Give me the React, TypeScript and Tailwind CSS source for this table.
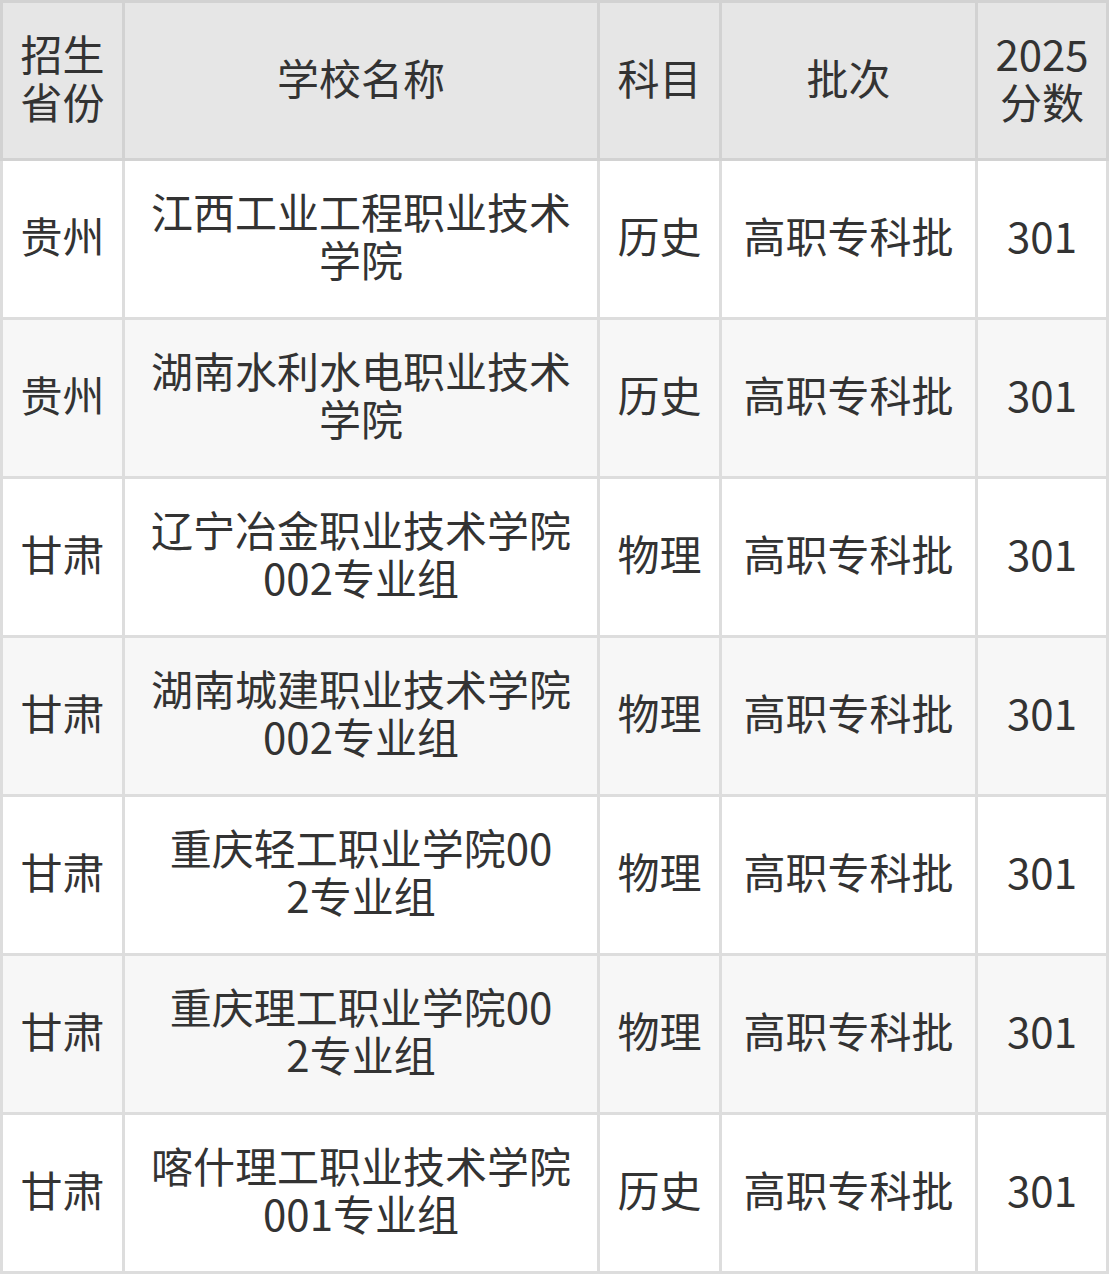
const font = { fontFamily: '"Noto Sans CJK SC", "Noto Sans", sans-serif' };

interface Row {
  province: string;
  school: string[];
  subject: string;
  batch: string;
  score: string;
}

const rows: Row[] = [
  { province: '贵州', school: ['江西工业工程职业技术', '学院'], subject: '历史', batch: '高职专科批', score: '301' },
  { province: '贵州', school: ['湖南水利水电职业技术', '学院'], subject: '历史', batch: '高职专科批', score: '301' },
  { province: '甘肃', school: ['辽宁冶金职业技术学院', '002专业组'], subject: '物理', batch: '高职专科批', score: '301' },
  { province: '甘肃', school: ['湖南城建职业技术学院', '002专业组'], subject: '物理', batch: '高职专科批', score: '301' },
  { province: '甘肃', school: ['重庆轻工职业学院00', '2专业组'], subject: '物理', batch: '高职专科批', score: '301' },
  { province: '甘肃', school: ['重庆理工职业学院00', '2专业组'], subject: '物理', batch: '高职专科批', score: '301' },
  { province: '甘肃', school: ['喀什理工职业技术学院', '001专业组'], subject: '历史', batch: '高职专科批', score: '301' },
];

const cols = 'grid grid-cols-[119px_472px_119px_253px_128px] gap-x-[3px]';

function Cell({ lines, bg }: { lines: string[]; bg: string }) {
  return (
    <div className={`flex flex-col items-center justify-center pb-[8px] text-center ${bg}`}>
      {lines.map((l, i) => (
        <div key={i} className="whitespace-nowrap">{l}</div>
      ))}
    </div>
  );
}

export default function App() {
  return (
    <div className="w-[1110px] bg-white text-[#333333] text-[42px] leading-[48px]" style={font}>
      <div className="w-[1109px]">
        <div className={`${cols} bg-[#d2d2d2] p-[3px] h-[161px]`}>
          <Cell lines={['招生', '省份']} bg="bg-[#e6e6e6]" />
          <Cell lines={['学校名称']} bg="bg-[#e6e6e6]" />
          <Cell lines={['科目']} bg="bg-[#e6e6e6]" />
          <Cell lines={['批次']} bg="bg-[#e6e6e6]" />
          <Cell lines={['2025', '分数']} bg="bg-[#e6e6e6]" />
        </div>
        <div className="flex flex-col gap-y-[3px] bg-[#dddddd] px-[3px] pb-[3px]">
          {rows.map((r, i) => {
            const bg = i % 2 === 0 ? 'bg-white' : 'bg-[#f7f7f7]';
            return (
              <div key={i} className={`${cols} h-[156px]`}>
                <Cell lines={[r.province]} bg={bg} />
                <Cell lines={r.school} bg={bg} />
                <Cell lines={[r.subject]} bg={bg} />
                <Cell lines={[r.batch]} bg={bg} />
                <Cell lines={[r.score]} bg={bg} />
              </div>
            );
          })}
        </div>
      </div>
    </div>
  );
}
